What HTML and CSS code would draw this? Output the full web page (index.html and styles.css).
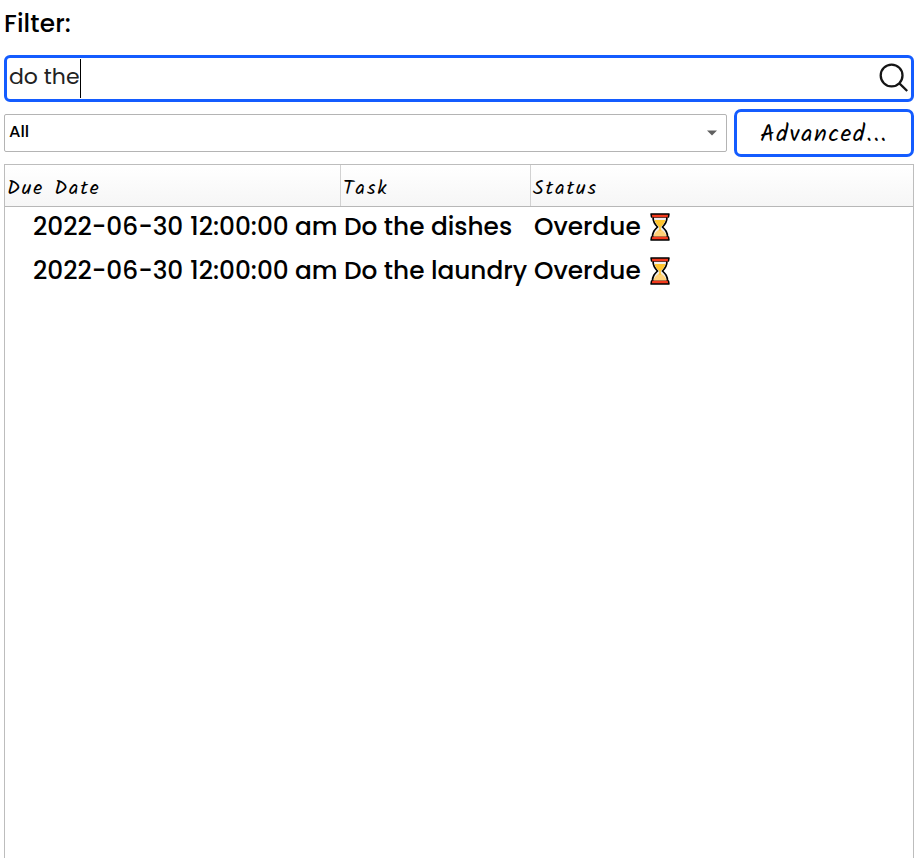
FILE: index.html
```html
<!DOCTYPE html>
<html lang="en">
<head>
<meta charset="utf-8">
<title>Tasks</title>
<link rel="stylesheet" href="styles.css">
</head>
<body>
<svg class="defs" width="0" height="0" aria-hidden="true">
  <symbol id="hourglass" viewBox="0 0 20 28">
    <path d="M3 4C3 9 4.500 11 7.500 14C4.500 17 2.500 19 2.500 24H17.500C17.500 19 15.500 17 12.500 14C15.500 11 17 9 17 4Z" fill="#f0f0f0" stroke="#000" stroke-width="1.700"/>
    <path d="M10 15C12 18 15.500 18.500 16.500 23.500H3.500C4.500 18.500 8 18 10 15Z" fill="#ffd178"/>
    <path d="M4.500 7H15.500C14.800 10 13 11.800 10.800 14V18H9.200V14C7 11.800 5.200 10 4.500 7Z" fill="#ffc52e"/>
    <path d="M1 1H19V4.300H1ZM1.500 23.700H18.500V27H1.500Z" fill="#f23a1d"/>
    <path d="M1.500 4L1 .9H19L18.500 4M1.500 24L1 27.100H19L18.500 24" fill="none" stroke="#000" stroke-width="1.500" stroke-linejoin="round" stroke-linecap="round"/>
  </symbol>
</svg>
<main class="panel">
  <div class="filter-label"><span>Filter:</span></div>
  <div class="search">
    <span class="query">do the</span><span class="caret"></span>
    <svg class="magnifier" width="30" height="30" viewBox="0 0 30 30"><circle cx="12.600" cy="12.500" r="10.900"/><path d="M20.400 20.400L28.200 28"/></svg>
  </div>
  <div class="controls">
    <div class="select"><span class="all">All</span><svg class="arrow" width="10" height="6" viewBox="0 0 10 6"><path d="M0 .5H10L5 5.500Z"/></svg></div>
    <div class="advanced"><span>Advanced...</span></div>
  </div>
  <div class="table">
    <div class="row head">
      <div class="cell"><span class="h-date">Due Date</span></div>
      <div class="cell"><span class="h-task">Task</span></div>
      <div class="cell"><span class="h-status">Status</span></div>
    </div>
    <div class="row item">
      <div class="due"><span class="date">2022-06-30</span><span class="time">12:00:00</span><span class="am">am</span></div>
      <div class="task"><span class="dishes">Do the dishes</span></div>
      <div class="status"><span class="overdue">Overdue</span><svg class="glass" width="20" height="28"><use href="#hourglass"/></svg></div>
    </div>
    <div class="row item">
      <div class="due"><span class="date">2022-06-30</span><span class="time">12:00:00</span><span class="am">am</span></div>
      <div class="task"><span class="laundry">Do the laundry</span></div>
      <div class="status"><span class="overdue">Overdue</span><svg class="glass" width="20" height="28"><use href="#hourglass"/></svg></div>
    </div>
  </div>
</main>
</body>
</html>
```
FILE: styles.css
```css
* { box-sizing: border-box; }
body { margin: 0; background: #fff; color: #000; font: 500 24.8px Poppins, Inter, sans-serif; overflow: hidden; }
.defs { display: block; height: 0; }
.panel { height: 858px; padding: 0 2px 0 4px; display: flex; flex-direction: column; }
.filter-label { height: 55px; line-height: 48px; white-space: nowrap; letter-spacing: .15px; }
.search { height: 47px; border: 3px solid #145cff; border-radius: 6px; display: flex; align-items: flex-start; padding-left: 2px; }
.query { width: 71px; font-size: 22px; font-weight: 400; line-height: 38px; color: #222; white-space: nowrap; }
.caret { width: 1px; height: 39px; margin-top: 1px; background: #000; }
.magnifier { margin: 5px 2px 0 auto; fill: none; stroke: #151515; stroke-width: 2.3; }
.controls { display: flex; height: 48px; margin-top: 7px; gap: 7px; }
.select { width: 723px; height: 38px; margin-top: 5px; border: 1px solid #b4b4b4; border-radius: 2px; display: flex; justify-content: space-between; padding: 0 9px 0 4px; }
.all { font-size: 16.500px; line-height: 33px; }
.arrow { margin-top: 15px; fill: #606060; }
.advanced { width: 180px; height: 48px; border: 3px solid #145cff; border-radius: 7px; font: 400 24px "Segoe Print", "Ink Free", Kalam, "Noto Sans", sans-serif; letter-spacing: 1.500px; line-height: 46px; padding-left: 23px; white-space: nowrap; }
.table { flex: 1; margin-top: 7px; border: 1px solid #bdbdbd; border-bottom: 0; }
.row { display: grid; grid-template-columns: 336px 190px 1fr; white-space: nowrap; }
.head { height: 42px; background: linear-gradient(#fff, #f6f6f6); border-bottom: 1px solid #b7b7b7; font: 400 20px "Segoe Print", "Ink Free", Kalam, "Noto Sans", sans-serif; line-height: 48px; }
.cell { height: 41px; padding-left: 2px; border-right: 1px solid #d2d2d2; }
.cell:last-child { border-right: 0; }
.h-date { letter-spacing: 1.900px; }
.h-task { letter-spacing: 1.900px; }
.h-status { letter-spacing: 1.900px; }
.item { height: 44px; line-height: 40px; }
.due { display: flex; padding-left: 28px; }
.date { width: 157px; }
.time { width: 105px; }
.task { padding-left: 3px; }
.status { padding-left: 3px; display: flex; }
.overdue { width: 116px; }
.glass { margin-top: 6px; }
```
